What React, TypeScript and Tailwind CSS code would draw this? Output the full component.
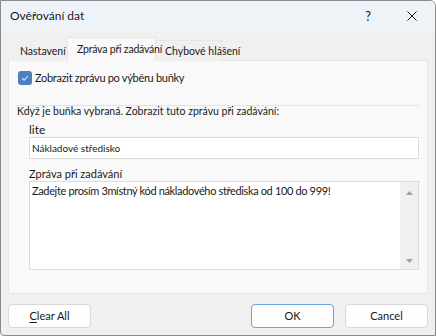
import React from 'react';

const font = { fontFamily: 'Lato, "Liberation Sans", sans-serif' };

function TitleBar() {
  return (
    <div className="flex h-[29px] shrink-0 items-center justify-between bg-[#eef3f9] pl-[9px] pr-[18px]">
      <span className="text-[12px] leading-[14px] text-[#1a1a1a]">Ověřování dat</span>
      <div className="flex items-center gap-[36px]">
        <span className="text-[13px] leading-[14px] text-[#1a1a1a]">?</span>
        <svg width="10" height="10" viewBox="0 0 10 10" aria-hidden="true">
          <path d="M0.5 0.5 L9.5 9.5 M9.5 0.5 L0.5 9.5" stroke="#222" strokeWidth="1" fill="none" />
        </svg>
      </div>
    </div>
  );
}

function Tabs() {
  return (
    <div className="relative z-10 -mb-px flex items-end pl-[8px]">
      <div className="flex h-[21px] w-[58px] items-center whitespace-nowrap bg-[#f0f0f0] pl-[11px] text-[10.5px] leading-[14px] text-[#1a1a1a]">
        Nastavení
      </div>
      <div className="relative z-10 flex h-[24px] w-[89px] items-center whitespace-nowrap border border-b-0 border-[#e6e6e6] bg-[#f9f9f9] pb-[2px] pl-[9px] text-[10.5px] leading-[14px] tracking-[-0.2px] text-[#1a1a1a]">
        Zpráva při zadávání
      </div>
      <div className="flex h-[21px] w-[66px] items-center whitespace-nowrap border-t border-r border-[#e6e6e6] bg-[#f0f0f0] pl-[9px] text-[10.5px] leading-[14px] text-[#1a1a1a]">
        Chybové hlášení
      </div>
    </div>
  );
}

function Checkbox() {
  return (
    <div className="flex h-[14px] w-[14px] items-center justify-center rounded-[3px] bg-[#4c7fc1]">
      <svg width="10" height="10" viewBox="0 0 10 10" aria-hidden="true">
        <path d="M2 5.2 L4.1 7.2 L8 3" stroke="#dde8f5" strokeWidth="1.1" fill="none" />
      </svg>
    </div>
  );
}

function Panel() {
  return (
    <div className="mx-[7px] flex h-[234px] flex-col border border-[#e6e6e6] bg-[#f9f9f9] pl-[9px] pr-[8px] pt-[10px]">
      <div className="flex h-[14px] items-center gap-[3px]">
        <Checkbox />
        <span className="text-[11px] leading-[14px] tracking-[-0.3px] text-[#1a1a1a]">Zobrazit zprávu po výběru buňky</span>
      </div>
      <div className="mt-[20px] -ml-[2px] h-px bg-[#e4e4e4]" />
      <div className="-ml-[1px] -mt-[2px] text-[10.5px] leading-[14px] text-[#1a1a1a]">
        Když je buňka vybraná. Zobrazit tuto zprávu při zadávání:
      </div>
      <div className="pl-[11px]">
        <div className="mt-[5px] text-[12px] leading-[14px] text-[#1a1a1a]">lite</div>
        <div className="flex h-[22px] items-center border border-[#dcdcdc] bg-white px-[2px] text-[10px] leading-[12px] text-[#1a1a1a]">
          Nákladové středisko
        </div>
        <div className="mt-[8px] text-[11px] leading-[14px] text-[#1a1a1a]">Zpráva při zadávání</div>
        <div className="flex h-[89px] border border-[#dcdcdc] bg-white">
          <div className="flex-1 px-[2px] pt-[2px] text-[11px] leading-[14px] tracking-[-0.35px] text-[#1a1a1a]">
            Zadejte prosím 3místný kód nákladového střediska od 100 do 999!
          </div>
          <div className="flex w-[18px] flex-col items-center justify-between bg-[#f0f0f0] pb-[6px] pt-[9px]">
            <svg width="7" height="4" viewBox="0 0 7 4" aria-hidden="true">
              <path d="M0 4 L3.5 0 L7 4 Z" fill="#a0a0a0" />
            </svg>
            <svg width="7" height="4" viewBox="0 0 7 4" aria-hidden="true">
              <path d="M0 0 L3.5 4 L7 0 Z" fill="#a0a0a0" />
            </svg>
          </div>
        </div>
      </div>
    </div>
  );
}

function Button({ children, primary }: { children: React.ReactNode; primary?: boolean }) {
  return (
    <button
      className={
        primary
          ? 'flex h-[24px] w-[83px] items-center justify-center rounded-[4px] border border-[#6aa3de] bg-[#fdfdfd] text-[11px] leading-[14px] text-[#1a1a1a]'
          : 'flex h-[24px] w-[83px] items-center justify-center rounded-[4px] border border-[#d9d9d9] bg-[#fdfdfd] text-[11px] leading-[14px] text-[#1a1a1a]'
      }
    >
      {children}
    </button>
  );
}

export default function App() {
  return (
    <div className="h-[336px] w-[436px] bg-white" style={font}>
      <div className="flex h-full w-full flex-col overflow-hidden rounded-tr-[6px] rounded-bl-[4px] border border-[#8a8a8a] bg-[#f0f0f0]">
        <TitleBar />
        <div className="mt-[7px]">
          <Tabs />
          <Panel />
        </div>
        <div className="mt-[10px] flex items-center pl-[7px] pr-[7px]">
          <Button>
            <span className="underline underline-offset-2">C</span>lear All
          </Button>
          <div className="flex-1" />
          <div className="flex gap-[11px]">
            <Button primary>OK</Button>
            <Button>Cancel</Button>
          </div>
        </div>
      </div>
    </div>
  );
}
